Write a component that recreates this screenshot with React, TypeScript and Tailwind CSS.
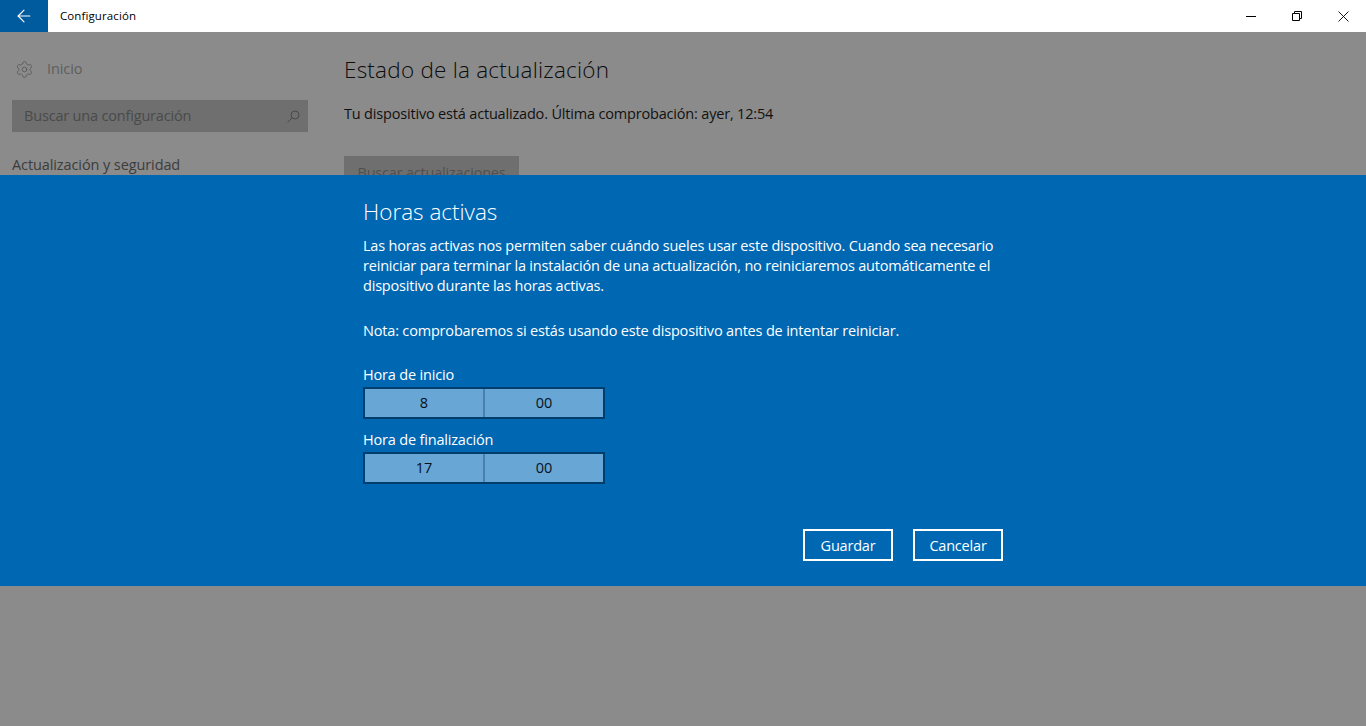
import { ArrowLeft, Settings } from 'lucide-react'

const font = { fontFamily: '"Open Sans", "Noto Sans", sans-serif' }

function TimeField({ label, hour, minute }: { label: string; hour: string; minute: string }) {
  return (
    <div className="flex flex-col">
      <label className="h-[22px] text-[14.5px] leading-[20px] tracking-[-0.18px]">{label}</label>
      <div className="flex h-8 w-[242px] border-2 border-[#003e6e] bg-[#68a6d5] text-[14.5px] text-[#07121c]">
        <div className="flex flex-1 items-center justify-center border-r-2 border-[#4a7fab]">{hour}</div>
        <div className="flex flex-1 items-center justify-center">{minute}</div>
      </div>
    </div>
  )
}

export default function App() {
  return (
    <div style={font} className="relative flex h-[726px] w-[1366px] flex-col overflow-hidden bg-[#8b8b8b]">
      <header className="flex h-8 shrink-0 items-center bg-white text-black">
        <div className="flex h-8 w-12 items-center justify-center bg-[#005a9e] text-white">
          <ArrowLeft size={20} strokeWidth={1.4} />
        </div>
        <span className="ml-3 text-[11.5px] tracking-[0.1px]">Configuración</span>
        <div className="ml-auto flex h-8">
          <div className="flex w-[46px] items-center justify-center">
            <svg width="10" height="10" viewBox="0 0 10 10" fill="none" stroke="black">
              <path d="M0 5.5h10" />
            </svg>
          </div>
          <div className="flex w-[46px] items-center justify-center">
            <svg width="10" height="10" viewBox="0 0 10 10" fill="none" stroke="black">
              <path d="M2.5 2.5V.5h7v7H7.5" />
              <path d="M.5 2.5h7v7h-7z" />
            </svg>
          </div>
          <div className="flex w-[46px] items-center justify-center">
            <svg width="11" height="11" viewBox="0 0 11 11" fill="none" stroke="black" strokeWidth="0.9">
              <path d="M.5.5l10 10M10.5.5l-10 10" />
            </svg>
          </div>
        </div>
      </header>

      <main className="flex flex-1">
        <aside className="w-[344px] shrink-0 pl-3 pt-[26px] text-[#4c4c4c]">
          <div className="flex h-[22px] items-center gap-[13px] pl-[3px]">
            <Settings size={19} strokeWidth={1} className="text-[#555555]" />
            <span className="text-[14.5px] tracking-[-0.1px] text-[#5e5e5e]">Inicio</span>
          </div>
          <div className="mt-[20px] flex h-8 w-[296px] items-center justify-between bg-[#6f6f6f] pl-3 pr-2">
            <span className="text-[14.5px] tracking-[-0.18px] text-[#4a4a4a]">Buscar una configuración</span>
            <svg width="13" height="13" viewBox="0 0 13 13" fill="none" stroke="#4a4a4a">
              <circle cx="8" cy="5" r="4" />
              <path d="M5.2 7.8L.6 12.4" />
            </svg>
          </div>
          <p className="mt-[22px] text-[14.5px] tracking-[-0.1px] text-[#3c3c3c]">Actualización y seguridad</p>
        </aside>
        <section className="flex-1 pt-[21px] text-[#111111]">
          <h1 className="text-[22.5px] font-light leading-[34px] tracking-[0.23px] text-[#0c0c0c]">Estado de la actualización</h1>
          <p className="mt-[17px] text-[14.5px] leading-[20px] tracking-[-0.18px]">
            Tu dispositivo está actualizado. Última comprobación: ayer, 12:54
          </p>
          <div className="mt-[32px] flex h-8 w-[175px] items-center justify-center bg-[#6f6f6f] pt-px text-[14.5px] tracking-[-0.2px] text-[#4f4f4f]">
            Buscar actualizaciones
          </div>
        </section>
      </main>

      <div className="absolute inset-x-0 top-[175px] flex h-[411px] justify-start bg-[#0067b3] pl-[363px] text-white">
        <div className="flex w-[640px] flex-col">
          <h2 className="mt-[21px] text-[22.5px] font-light leading-[32px]">Horas activas</h2>
          <p className="mt-[8px] text-[14.5px] leading-[20px] tracking-[-0.2px]">
            Las horas activas nos permiten saber cuándo sueles usar este dispositivo. Cuando sea necesario
            <br />
            reiniciar para terminar la instalación de una actualización, no reiniciaremos automáticamente el
            <br />
            dispositivo durante las horas activas.
          </p>
          <p className="mt-[25px] text-[14.5px] leading-[20px] tracking-[-0.18px]">
            Nota: comprobaremos si estás usando este dispositivo antes de intentar reiniciar.
          </p>
          <div className="mt-[24px] flex flex-col gap-[11px]">
            <TimeField label="Hora de inicio" hour="8" minute="00" />
            <TimeField label="Hora de finalización" hour="17" minute="00" />
          </div>
          <div className="mt-[45px] flex justify-end gap-5">
            <button className="h-8 w-[90px] border-2 border-white pt-px text-[14.5px] tracking-[-0.2px]">Guardar</button>
            <button className="h-8 w-[90px] border-2 border-white pt-px text-[14.5px] tracking-[-0.2px]">Cancelar</button>
          </div>
        </div>
      </div>
    </div>
  )
}
